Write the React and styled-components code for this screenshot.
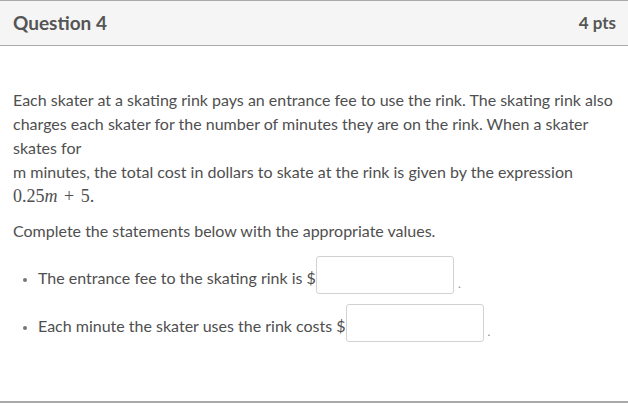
import React from "react";
import styled, { createGlobalStyle } from "styled-components";

const GlobalStyle = createGlobalStyle`
  body {
    margin: 0;
    background: #fff;
    font-family: Lato, "Open Sans", sans-serif;
    color: #4f4f4f;
  }
`;

const Question = styled.div`
  width: 628px;
  border-bottom: 2px solid #a9a9a9;
`;

const Header = styled.div`
  display: flex;
  justify-content: space-between;
  align-items: center;
  height: 44px;
  padding: 0 12px 0 13px;
  background: #f5f5f5;
  border-top: 1px solid #aaa;
  border-bottom: 1px solid #aaa;
  font-weight: 700;
  color: #555;
`;

const Title = styled.span`
  font-size: 19px;
  margin-top: -2px;
`;

const Points = styled.span`
  font-size: 17px;
  margin-top: -2px;
`;

const Body = styled.div`
  padding: 42px 13px 50px 13px;
  font-size: 16px;
  line-height: 24px;
`;

const Para = styled.p`
  margin: 0 0 11px 0;
`;

const Math = styled.span`
  font-family: "Liberation Serif", "DejaVu Serif", serif;
  font-size: 18px;
  word-spacing: 2px;
  i {
    font-style: italic;
  }
`;

const List = styled.ul`
  margin: 12px 0 0 0;
  padding: 0 0 0 25px;
`;

const Item = styled.li`
  margin-bottom: 10px;
  padding-top: 4px;
  height: 34px;
  line-height: 38px;
  &::marker {
    font-size: 13px;
    color: #777;
  }
`;

const Blank = styled.span`
  display: inline-block;
  width: 136px;
  height: 36px;
  vertical-align: middle;
  border: 1px solid #d2d2d2;
  border-radius: 3px;
  background: #fff;
  margin-top: -10px;
`;

const Dot = styled.span`
  margin-left: 4px;
  font-size: 12px;
  color: #888;
  vertical-align: -4px;
`;

export default function App() {
  return (
    <>
      <GlobalStyle />
      <Question>
        <Header>
          <Title>Question 4</Title>
          <Points>4 pts</Points>
        </Header>
        <Body>
          <Para>
            Each skater at a skating rink pays an entrance fee to use the rink. The skating rink also
            charges each skater for the number of minutes they are on the rink. When a skater
            <br />
            skates for
            <br />
            m minutes, the total cost in dollars to skate at the rink is given by the expression
            <br />
            <Math>
              0.25<i>m</i> + 5.
            </Math>
          </Para>
          <Para>Complete the statements below with the appropriate values.</Para>
          <List>
            <Item>
              The entrance fee to the skating rink is $<Blank />
              <Dot>.</Dot>
            </Item>
            <Item>
              Each minute the skater uses the rink costs $<Blank />
              <Dot>.</Dot>
            </Item>
          </List>
        </Body>
      </Question>
    </>
  );
}
